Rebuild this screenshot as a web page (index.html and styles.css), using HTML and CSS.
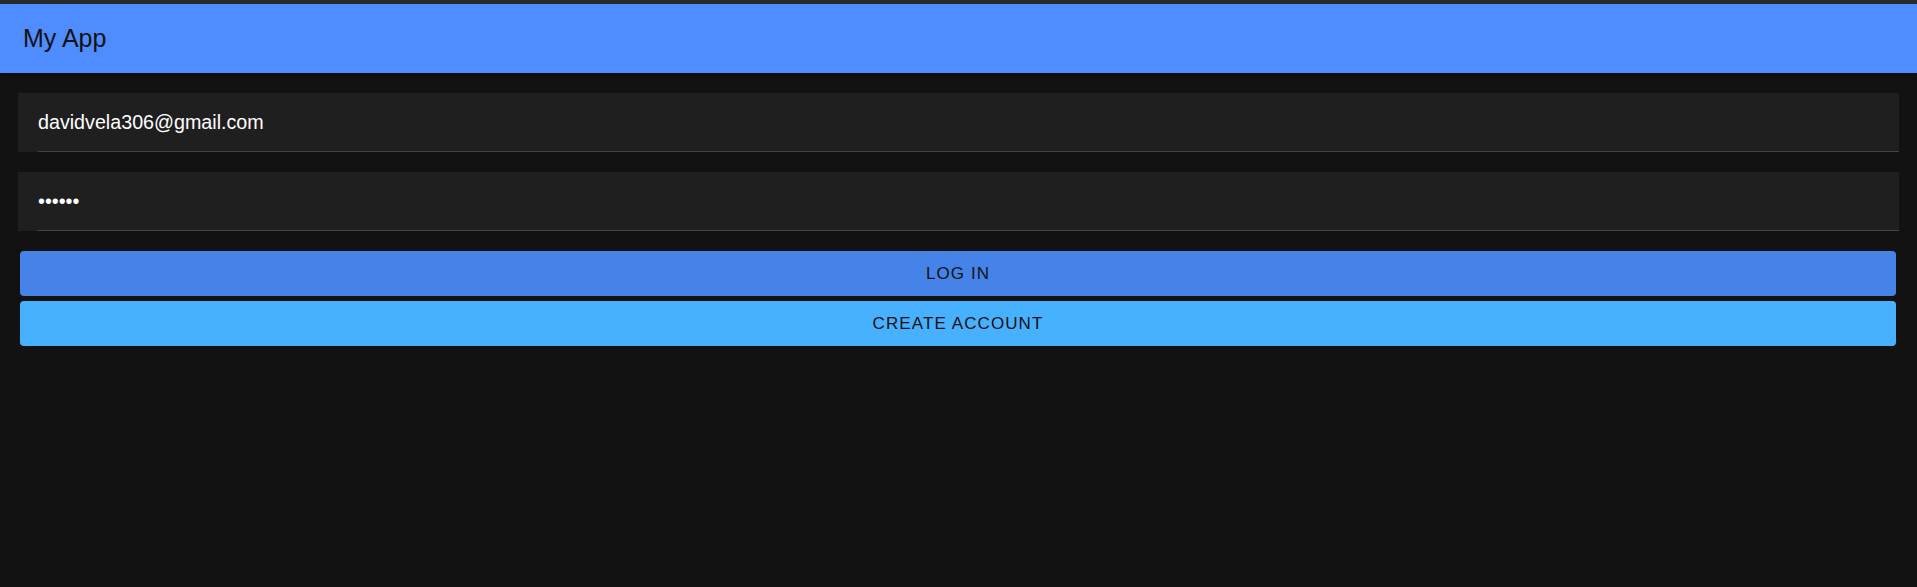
FILE: index.html
```html
<!DOCTYPE html>
<html lang="en">
<head>
<meta charset="utf-8">
<title>My App</title>
<link rel="stylesheet" href="styles.css">
</head>
<body>
<div class="topstrip"></div>
<header class="appbar">
  <h1 class="title">My App</h1>
</header>
<main class="content">
  <div class="field field-email">
    <div class="field-inner"><span class="value">davidvela306@gmail.com</span></div>
  </div>
  <div class="field field-password">
    <div class="field-inner"><span class="value dots">••••••</span></div>
  </div>
  <div class="actions">
    <button class="btn btn-login" type="button">Log in</button>
    <button class="btn btn-create" type="button">Create account</button>
  </div>
</main>
</body>
</html>
```
FILE: styles.css
```css
html, body {
  margin: 0;
  padding: 0;
  background: #121212;
  height: 100%;
}
body {
  font-family: "Liberation Sans", Arial, sans-serif;
  overflow: hidden;
}
.topstrip {
  height: 4px;
  background: #2b2b2b;
}
.appbar {
  height: 69px;
  background: #4f8cff;
  display: flex;
  align-items: center;
  padding-left: 23px;
  box-shadow: 0 2px 4px rgba(0, 0, 0, 0.35);
  position: relative;
}
.title {
  margin: 0;
  font-size: 25px;
  font-weight: 400;
  color: #111;
  line-height: 1;
}
.content {
  padding: 20px 18px 0 18px;
  display: flex;
  flex-direction: column;
}
.field {
  background: #1f1f1f;
  padding-left: 20px;
  display: flex;
}
.field-email {
  margin-bottom: 20px;
}
.field-password {
  margin-bottom: 20px;
}
.field-inner {
  flex: 1;
  height: 58px;
  border-bottom: 1px solid #444;
  display: flex;
  align-items: center;
}
.value {
  font-size: 19.7px;
  line-height: 23px;
  color: #fff;
}
.dots {
  letter-spacing: 0;
}
.actions {
  display: flex;
  flex-direction: column;
  gap: 5px;
  padding: 0 3px 0 2px;
}
.btn {
  height: 45px;
  border: none;
  border-radius: 4px;
  font-family: "Liberation Sans", Arial, sans-serif;
  font-size: 17px;
  letter-spacing: 1.1px;
  text-transform: uppercase;
  color: #111;
  cursor: pointer;
  padding: 0;
}
.btn-login {
  background: #4583e9;
}
.btn-create {
  background: #47b0ff;
}
```
